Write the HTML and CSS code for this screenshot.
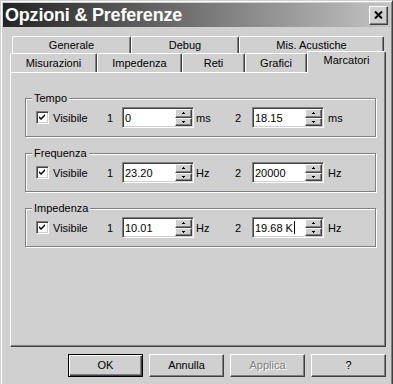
FILE: index.html
```html
<!DOCTYPE html>
<html lang="it">
<head>
    <meta charset="UTF-8">
    <title>Opzioni &amp; Preferenze</title>
    <link rel="stylesheet" href="styles.css">
</head>
<body>
    <div class="window">
        <div class="titlebar">
            <span class="title">Opzioni &amp; Preferenze</span>
            <div class="close">
                <svg width="9" height="8" viewBox="0 0 9 8"><path d="M1 0.5 L8 7.5 M8 0.5 L1 7.5" stroke="#000" stroke-width="2"/></svg>
            </div>
        </div>

        <div class="client">
            <div class="tab-row back">
                <div class="tab t-generale">Generale</div>
                <div class="tab t-debug">Debug</div>
                <div class="tab t-acustiche">Mis. Acustiche</div>
            </div>
            <div class="tab-row front">
                <div class="tab t-misurazioni">Misurazioni</div>
                <div class="tab t-impedenza">Impedenza</div>
                <div class="tab t-reti">Reti</div>
                <div class="tab t-grafici">Grafici</div>
                <div class="tab t-marcatori selected">Marcatori</div>
            </div>

            <div class="panel">
                <fieldset class="group">
                    <legend>Tempo</legend>
                    <div class="row">
                        <label class="check"><span class="box"><svg width="9" height="9" viewBox="0 0 9 9"><polygon points="1,3 3,5 7,1 7,3 3,7 1,5" fill="#000"/></svg></span>Visibile</label>
                        <span class="idx">1</span>
                        <div class="spin"><span class="field">0</span><span class="arrows"><span class="up"></span><span class="down"></span></span></div>
                        <span class="unit">ms</span>
                        <span class="idx idx2">2</span>
                        <div class="spin"><span class="field">18.15</span><span class="arrows"><span class="up"></span><span class="down"></span></span></div>
                        <span class="unit unit2">ms</span>
                    </div>
                </fieldset>

                <fieldset class="group">
                    <legend>Frequenza</legend>
                    <div class="row">
                        <label class="check"><span class="box"><svg width="9" height="9" viewBox="0 0 9 9"><polygon points="1,3 3,5 7,1 7,3 3,7 1,5" fill="#000"/></svg></span>Visibile</label>
                        <span class="idx">1</span>
                        <div class="spin"><span class="field">23.20</span><span class="arrows"><span class="up"></span><span class="down"></span></span></div>
                        <span class="unit">Hz</span>
                        <span class="idx idx2">2</span>
                        <div class="spin"><span class="field">20000</span><span class="arrows"><span class="up"></span><span class="down"></span></span></div>
                        <span class="unit unit2">Hz</span>
                    </div>
                </fieldset>

                <fieldset class="group">
                    <legend>Impedenza</legend>
                    <div class="row">
                        <label class="check"><span class="box"><svg width="9" height="9" viewBox="0 0 9 9"><polygon points="1,3 3,5 7,1 7,3 3,7 1,5" fill="#000"/></svg></span>Visibile</label>
                        <span class="idx">1</span>
                        <div class="spin"><span class="field">10.01</span><span class="arrows"><span class="up"></span><span class="down"></span></span></div>
                        <span class="unit">Hz</span>
                        <span class="idx idx2">2</span>
                        <div class="spin"><span class="field">19.68 K<span class="caret"></span></span><span class="arrows"><span class="up"></span><span class="down"></span></span></div>
                        <span class="unit unit2">Hz</span>
                    </div>
                </fieldset>
            </div>

            <div class="buttons">
                <div class="btn default">OK</div>
                <div class="btn">Annulla</div>
                <div class="btn disabled">Applica</div>
                <div class="btn">?</div>
            </div>
        </div>
    </div>
</body>
</html>
```

FILE: styles.css
```css
* {
    margin: 0;
    padding: 0;
    box-sizing: border-box;
}

body {
    width: 393px;
    height: 384px;
    overflow: hidden;
    background: #d0d0d0;
    font-family: "Liberation Sans", Arial, sans-serif;
    font-size: 11px;
    color: #000;
}

.window {
    width: 393px;
    height: 392px;
    border: 1px solid;
    border-color: #d0d0d0 #404040 #404040 #d0d0d0;
    box-shadow: inset 1px 1px #fff, inset -1px -1px #808080;
    padding: 2px;
}

/* title bar */
.titlebar {
    height: 24px;
    background: linear-gradient(to right, #242424, #c4c4c4);
    display: flex;
    align-items: center;
    justify-content: space-between;
    padding: 0 2px 0 2px;
}

.title {
    color: #fff;
    font-weight: 700;
    font-size: 18px;
    letter-spacing: -0.2px;
}

.close {
    width: 19px;
    height: 19px;
    background: #d0d0d0;
    border: 1px solid;
    border-color: #fff #404040 #404040 #fff;
    box-shadow: inset -1px -1px #808080;
    display: flex;
    align-items: center;
    justify-content: center;
    padding-bottom: 1px;
}

/* tabs */
.client {
    margin-top: 9px;
    padding: 0 4px 0 7px;
}

.tab-row {
    display: flex;
    align-items: flex-start;
}

.tab-row.back {
    height: 17px;
    margin-left: 2px;
}

.tab-row.front {
    height: 19px;
}

.tab {
    border: 1px solid;
    border-bottom: none;
    border-color: #fff #404040 transparent #fff;
    box-shadow: inset -1px 0 #808080;
    border-radius: 2px 2px 0 0;
    text-align: center;
    background: #d0d0d0;
}

.back .tab {
    height: 17px;
    line-height: 16px;
}

.front .tab {
    height: 19px;
    line-height: 18px;
}

.t-generale { width: 119px; }
.t-debug { width: 108px; }
.t-acustiche { width: 145px; }
.t-misurazioni { width: 87px; }
.t-impedenza { width: 85px; }
.t-reti { width: 63px; }
.t-grafici { width: 62px; }
.t-marcatori { width: 79px; }

.front .tab.selected {
    position: relative;
    z-index: 1;
    height: 22px;
    line-height: 16px;
    margin-top: -2px;
}

/* page */
.panel {
    height: 275px;
    border: 1px solid;
    border-color: #fff #404040 #404040 #fff;
    box-shadow: inset -1px -1px #808080;
    padding: 19px 9px 0 14px;
}

.group {
    border: 1px solid #808080;
    box-shadow: inset 1px 1px #fff, 1px 1px #fff;
    padding: 2px 0 8px 10px;
    margin-bottom: 10px;
}

.group legend {
    margin-left: -4px;
    padding: 0 2px;
    line-height: 13px;
    background: #d0d0d0;
}

.row {
    display: flex;
    align-items: center;
    height: 21px;
}

.check {
    width: 71px;
    display: flex;
    align-items: center;
    gap: 4px;
}

.box {
    width: 13px;
    height: 13px;
    background: #fff;
    border: 1px solid;
    border-color: #808080 #fff #fff #808080;
    box-shadow: inset 1px 1px #404040, inset -1px -1px #d0d0d0;
    display: flex;
    align-items: center;
    justify-content: center;
}

.idx {
    width: 15px;
}

.idx2 {
    width: 17px;
}

.spin {
    width: 72px;
    height: 21px;
    display: flex;
    border: 1px solid;
    border-color: #808080 #fff #fff #808080;
    box-shadow: inset 1px 1px #404040, inset -1px -1px #d0d0d0;
    padding: 2px 1px 1px 2px;
    background: #fff;
}

.field {
    flex: 1;
    line-height: 16px;
    padding-left: 0;
}

.caret {
    display: inline-block;
    width: 1px;
    height: 13px;
    background: #000;
    vertical-align: -2px;
    margin-left: 1px;
}

.arrows {
    width: 17px;
    display: flex;
    flex-direction: column;
    margin-top: -1px;
}

.arrows span {
    flex: 1;
    background: #d0d0d0;
    border: 1px solid;
    border-color: #fff #404040 #404040 #fff;
    box-shadow: inset -1px -1px #808080;
    display: flex;
    align-items: center;
    justify-content: center;
}

.arrows span::before {
    content: "";
    width: 1px;
    height: 1px;
    background: #000;
}

.arrows .up::before {
    box-shadow: -1px 1px #000, 0 1px #000, 1px 1px #000;
    margin-top: -1px;
}

.arrows .down::before {
    box-shadow: -1px -1px #000, 0 -1px #000, 1px -1px #000;
    margin-top: 1px;
}

.unit {
    width: 41px;
    padding-left: 2px;
}

.unit2 {
    padding-left: 4px;
}

/* buttons */
.buttons {
    display: flex;
    justify-content: flex-end;
    gap: 6px;
    margin-top: 7px;
}

.btn {
    width: 75px;
    height: 23px;
    line-height: 21px;
    text-align: center;
    background: #d0d0d0;
    border: 1px solid;
    border-color: #fff #404040 #404040 #fff;
    box-shadow: inset -1px -1px #808080;
}

.btn.default {
    border-color: #000;
    box-shadow: inset 1px 1px #fff, inset -1px -1px #404040, inset -2px -2px #808080;
}

.btn.disabled {
    color: #808080;
    text-shadow: 1px 1px #fff;
}
```
